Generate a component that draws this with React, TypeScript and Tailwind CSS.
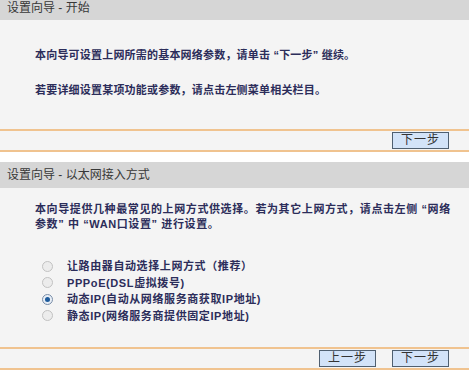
const font = { fontFamily: '"Liberation Sans", "Noto Sans CJK SC", sans-serif' }

function Header({ title, first }: { title: string; first?: boolean }) {
  return (
    <div
      className={`bg-[#d6d6d6] text-[#383838] text-[12px] pl-[7px] flex items-center ${first ? "h-[20px] pb-[5px]" : "h-[26px]"}`}
    >
      {title}
    </div>
  )
}

function Btn({ label }: { label: string }) {
  return (
    <button className="w-[57px] h-[17px] bg-[#d3e3f8] border border-[#4f5f70] text-[12px] leading-[15px] text-[#333] tracking-[1px]">
      {label}
    </button>
  )
}

function Radio({ checked, label }: { checked?: boolean; label: string }) {
  return (
    <div className="flex items-center h-[16.5px]">
      <span
        className={`w-[11px] h-[11px] rounded-full border flex items-center justify-center ml-[42px] ${checked ? "border-[#7a8ea8] bg-[#e8eef6]" : "border-[#c2c2c2] bg-[#ececec]"}`}
      >
        {checked && <span className="w-[5px] h-[5px] rounded-full bg-[#1d5b9c]" />}
      </span>
      <span className="ml-[14px] tracking-[0.6px]">{label}</span>
    </div>
  )
}

function ButtonRow({ children }: { children: React.ReactNode }) {
  return (
    <div className="border-t-2 border-b-2 border-[#f0c38f] bg-[#f4f4f4] h-[23px] flex items-center justify-end gap-[16px] pr-[20px]">
      {children}
    </div>
  )
}

export default function App() {
  return (
    <div className="w-[469px] h-[375px] bg-white overflow-hidden" style={font}>
      <Header title="设置向导 - 开始" first />
      <div className="bg-[#f4f4f4] h-[109px] pl-[35px] pt-[27px] text-[11px] font-bold text-[#2c2d5a] tracking-[0.2px]">
        <p className="h-[16px] leading-[16px]">
          本向导可设置上网所需的基本网络参数，请单击 “下一步” 继续。
        </p>
        <p className="h-[16px] leading-[16px] mt-[19px]">
          若要详细设置某项功能或参数，请点击左侧菜单相关栏目。
        </p>
      </div>
      <ButtonRow>
        <Btn label="下一步" />
      </ButtonRow>
      <div className="h-[10px]" />
      <Header title="设置向导 - 以太网接入方式" />
      <div className="bg-[#f4f4f4] h-[159px] pl-[35px] pt-[14px] text-[11px] font-bold text-[#2c2d5a] tracking-[0.6px]">
        <p className="leading-[15px] whitespace-nowrap">
          本向导提供几种最常见的上网方式供选择。若为其它上网方式，请点击左侧 “网络
          <br />
          参数” 中 “WAN口设置” 进行设置。
        </p>
        <div className="mt-[26px] -ml-[35px]">
          <Radio label="让路由器自动选择上网方式（推荐）" />
          <Radio label="PPPoE(DSL虚拟拨号)" />
          <Radio checked label="动态IP(自动从网络服务商获取IP地址)" />
          <Radio label="静态IP(网络服务商提供固定IP地址)" />
        </div>
      </div>
      <ButtonRow>
        <Btn label="上一步" />
        <Btn label="下一步" />
      </ButtonRow>
    </div>
  )
}
